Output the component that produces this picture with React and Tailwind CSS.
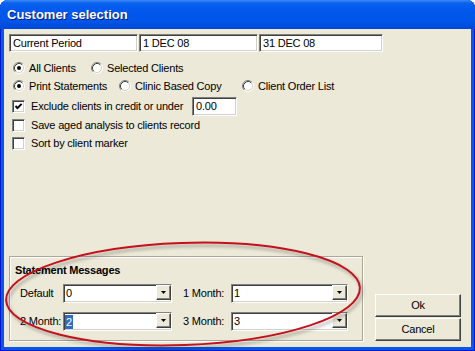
import React from "react";

const sunken =
  "border border-t-[#808080] border-l-[#808080] border-b-white border-r-white shadow-[inset_1px_1px_0_#404040,inset_-1px_-1px_0_#d4d0c8]";
const raised =
  "border border-t-white border-l-white border-b-[#404040] border-r-[#404040] shadow-[inset_-1px_-1px_0_#808080]";

function Radio({ checked, label, className = "" }) {
  return (
    <div className={`flex items-center ${className}`}>
      <svg width="12" height="12" viewBox="0 0 12 12" className="shrink-0">
        <circle cx="6" cy="6" r="4.5" fill="white" />
        <path d="M2.11 9.89 A5.5 5.5 0 0 1 9.89 2.11" stroke="#808080" fill="none" />
        <path d="M9.89 2.11 A5.5 5.5 0 0 1 2.11 9.89" stroke="white" fill="none" />
        <path d="M2.82 9.18 A4.5 4.5 0 0 1 9.18 2.82" stroke="#404040" fill="none" />
        <path d="M9.18 2.82 A4.5 4.5 0 0 1 2.82 9.18" stroke="#d4d0c8" fill="none" />
        {checked && <circle cx="6" cy="6" r="2" fill="black" />}
      </svg>
      <span className="ml-[4px]">{label}</span>
    </div>
  );
}

function Check({ checked, label, className = "" }) {
  return (
    <div className={`flex items-center ${className}`}>
      <span className={`w-[13px] h-[13px] bg-white shrink-0 flex ${sunken}`}>
        {checked && (
          <svg width="9" height="9" viewBox="0 0 9 9" className="m-[1px]">
            <polyline points="1.5,4 3.5,6.2 7.6,1.8" fill="none" stroke="black" strokeWidth="1.9" />
          </svg>
        )}
      </span>
      <span className="ml-[6px]">{label}</span>
    </div>
  );
}

function Combo({ value, width, selected }) {
  return (
    <div className={`h-[19px] flex bg-white ${sunken} ${width}`}>
      <div className="flex-1 flex items-center pl-[1px]">
        {selected ? (
          <span className="bg-[#316ac5] text-white px-[1px] leading-[14px]">{value}</span>
        ) : (
          <span className="pl-[1px]">{value}</span>
        )}
      </div>
      <div className={`w-[15px] h-[15px] bg-[#ece9d8] flex items-center justify-center ${raised}`}>
        <svg width="5" height="3" viewBox="0 0 5 3">
          <polygon points="0,0 5,0 2.5,3" fill="black" />
        </svg>
      </div>
    </div>
  );
}

export default function App() {
  return (
    <div className="w-[475px] h-[351px] bg-white font-['Liberation_Sans',Arial,sans-serif] text-[11px] tracking-[-0.2px] text-black">
      <div className="relative w-[475px] h-[351px] rounded-t-[8px] overflow-hidden bg-[#0a56e8] flex flex-col shadow-[inset_1px_0_0_#0019cf,inset_-1px_0_0_#0019cf,inset_0_-1px_0_#0019cf]">
        {/* TITLE BAR */}
        <div className="h-[29px] shrink-0 flex items-center pl-[7px] bg-[linear-gradient(180deg,#3d8df5_0%,#0b63ee_10%,#0058ee_35%,#0055e6_75%,#0047d6_100%)]">
          <span className="text-white font-bold text-[13px] tracking-normal [text-shadow:1px_1px_0_#0a1883]">
            Customer selection
          </span>
        </div>

        {/* BODY */}
        <div className="flex-1 mx-[4px] mb-[4px] bg-[#ece9d8] flex flex-col pt-[5px] pl-[5px]">
          <div className="flex gap-[1px] h-[18px]">
            <div className={`w-[129px] bg-white flex items-center pl-[3px] ${sunken}`}>Current Period</div>
            <div className={`w-[119px] bg-white flex items-center pl-[3px] ${sunken}`}>1 DEC 08</div>
            <div className={`w-[124px] bg-white flex items-center pl-[3px] ${sunken}`}>31 DEC 08</div>
          </div>

          <div className="flex h-[18px] mt-[7px] pl-[4px]">
            <Radio checked label="All Clients" className="w-[78px]" />
            <Radio label="Selected Clients" />
          </div>
          <div className="flex h-[18px] pl-[4px]">
            <Radio checked label="Print Statements" className="w-[106px]" />
            <Radio label="Clinic Based Copy" className="w-[123px]" />
            <Radio label="Client Order List" />
          </div>

          <div className="flex items-center h-[19px] mt-[2px] pl-[3px]">
            <Check checked label="Exclude clients in credit or under" className="w-[180px]" />
            <div className={`w-[45px] h-[19px] bg-white flex items-center pl-[3px] ${sunken}`}>0.00</div>
          </div>
          <Check label="Save aged analysis to clients record" className="h-[18px] pl-[3px]" />
          <Check label="Sort by client marker" className="h-[18px] pl-[3px]" />

          {/* BOTTOM */}
          <div className="mt-auto flex items-end pb-[6px]">
            <div className="w-[354px] h-[85px] border border-[#aca899] shadow-[inset_1px_1px_0_white,1px_1px_0_white] flex flex-col">
              <div className="h-[14px] mt-[6px] pl-[5px] flex items-center font-bold">Statement Messages</div>
              <div className="flex items-center mt-[7px] pl-[10px]">
                <span className="w-[43px]">Default</span>
                <Combo value="0" width="w-[109px]" />
                <span className="w-[59px] pl-[11px]">1 Month:</span>
                <Combo value="1" width="w-[117px]" />
              </div>
              <div className="flex items-center mt-[9px] pl-[10px]">
                <span className="w-[43px]">2 Month:</span>
                <Combo value="2" width="w-[109px]" selected />
                <span className="w-[59px] pl-[11px]">3 Month:</span>
                <Combo value="3" width="w-[117px]" />
              </div>
            </div>

            <div className="ml-[12px] w-[86px] flex flex-col gap-[1px]">
              <button className={`h-[23px] bg-[#ece9d8] ${raised}`}>Ok</button>
              <button className={`h-[23px] bg-[#ece9d8] ${raised}`}>Cancel</button>
            </div>
          </div>
        </div>

        {/* RED HIGHLIGHT ELLIPSE */}
        <svg className="absolute inset-0 pointer-events-none" width="475" height="351" viewBox="0 0 475 351">
          <defs>
            <filter id="soft" x="-10%" y="-30%" width="120%" height="160%">
              <feGaussianBlur stdDeviation="1.5" />
            </filter>
          </defs>
          <g transform="rotate(-2 183 294)">
            <ellipse cx="185" cy="297" rx="177" ry="51" fill="none" stroke="rgba(0,0,0,0.22)" strokeWidth="3" filter="url(#soft)" />
            <ellipse cx="183" cy="294" rx="177" ry="51" fill="none" stroke="#c4111b" strokeWidth="2" />
          </g>
        </svg>
      </div>
    </div>
  );
}
